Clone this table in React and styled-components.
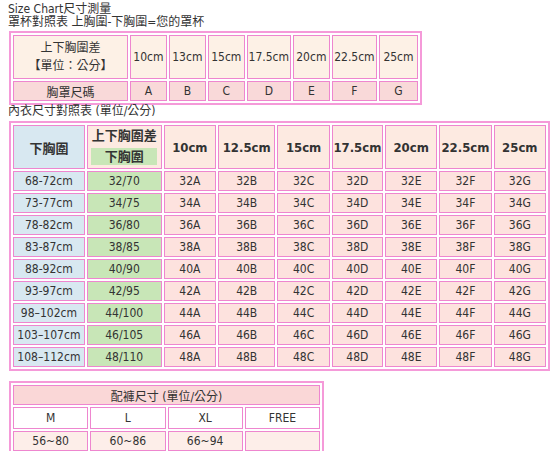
import React from 'react';
import styled, { createGlobalStyle } from 'styled-components';

const GlobalStyle = createGlobalStyle`
  body {
    margin: 0;
    background: #ffffff;
    font-family: "DejaVu Sans Condensed", "DejaVu Sans", "Noto Sans CJK TC", sans-serif;
    color: #333333;
  }
`;

const Page = styled.div`
  padding: 3px 0 0 8px;
  width: 552px;
  box-sizing: border-box;
`;

const Caption = styled.div`
  font-size: 12px;
  line-height: 13px;
  height: 13px;
  color: #333;
`;

const Grid = styled.table`
  border-collapse: separate;
  border-spacing: 2px;
  border: 2px solid #f59ad9;
  table-layout: fixed;
  width: ${props => props.width}px;
  margin-left: 1px;
  margin-top: ${props => props.top || 0}px;
  font-size: 12px;
`;

const bg = {
  cream: '#fdf1e6',
  peach: '#fdeae1',
  rose: '#f9d9d9',
  pink: '#fde2de',
  blue: '#d8e8f1',
  green: '#c8e6b7',
  white: '#ffffff',
  blush: '#fdeee9',
  title: '#fad7d7'
};

const Cell = styled.td`
  border: 1px solid #ee86cf;
  background: ${props => bg[props.tone] || '#fff'};
  text-align: center;
  vertical-align: middle;
  padding: 0;
  height: ${props => props.h || 18}px;
  font-weight: ${props => (props.bold ? 700 : 400)};
  font-size: ${props => (props.bold ? 13 : 12)}px;
  color: #333;
  white-space: nowrap;
`;

const Stack = styled.div`
  display: flex;
  flex-direction: column;
  align-items: center;
  gap: 4px;
  line-height: 14px;
`;

const GreenTag = styled.div`
  background: #c8e6b7;
  width: 66px;
  line-height: 17px;
  margin-top: 1px;
`;

const cups = ['10cm', '13cm', '15cm', '17.5cm', '20cm', '22.5cm', '25cm'];
const cupWidths = [36, 36, 36, 43, 36, 44, 38];
const letters = ['A', 'B', 'C', 'D', 'E', 'F', 'G'];

const sizeCols = ['10cm', '12.5cm', '15cm', '17.5cm', '20cm', '22.5cm', '25cm'];
const sizeWidths = [51, 56, 51, 50, 51, 51, 51];

const rows = [
  ['68-72cm', '32/70', 32],
  ['73-77cm', '34/75', 34],
  ['78-82cm', '36/80', 36],
  ['83-87cm', '38/85', 38],
  ['88-92cm', '40/90', 40],
  ['93-97cm', '42/95', 42],
  ['98–102cm', '44/100', 44],
  ['103–107cm', '46/105', 46],
  ['108–112cm', '48/110', 48]
];

const pants = [
  ['M', '56~80'],
  ['L', '60~86'],
  ['XL', '66~94'],
  ['FREE', '']
];

export default function App() {
  return (
    <Page>
      <GlobalStyle />
      <Caption>Size Chart尺寸測量</Caption>
      <Caption>罩杯對照表 上胸圍-下胸圍=您的罩杯</Caption>

      <Grid width={413} top={2}>
        <colgroup>
          <col style={{ width: 112 }} />
          {cupWidths.map((w, i) => (
            <col key={i} style={{ width: w }} />
          ))}
        </colgroup>
        <tbody>
          <tr>
            <Cell tone="cream" h={42}>
              <Stack>
                <span>上下胸圍差</span>
                <span>【單位：公分】</span>
              </Stack>
            </Cell>
            {cups.map(c => (
              <Cell key={c} tone="cream" h={42}>{c}</Cell>
            ))}
          </tr>
          <tr>
            <Cell tone="rose">胸罩尺碼</Cell>
            {letters.map(l => (
              <Cell key={l} tone="rose">{l}</Cell>
            ))}
          </tr>
        </tbody>
      </Grid>

      <Caption>內衣尺寸對照表 (單位/公分)</Caption>

      <Grid width={541} top={3}>
        <colgroup>
          <col style={{ width: 70 }} />
          <col style={{ width: 73 }} />
          {sizeWidths.map((w, i) => (
            <col key={i} style={{ width: w }} />
          ))}
        </colgroup>
        <tbody>
          <tr>
            <Cell tone="blue" h={42} bold>下胸圍</Cell>
            <Cell tone="peach" h={42} bold>
              <Stack>
                <span>上下胸圍差</span>
                <GreenTag>下胸圍</GreenTag>
              </Stack>
            </Cell>
            {sizeCols.map(c => (
              <Cell key={c} tone="peach" h={42} bold>{c}</Cell>
            ))}
          </tr>
          {rows.map(([under, band, n]) => (
            <tr key={under}>
              <Cell tone="blue">{under}</Cell>
              <Cell tone="green">{band}</Cell>
              {letters.map(l => (
                <Cell key={l} tone="pink">{n + l}</Cell>
              ))}
            </tr>
          ))}
        </tbody>
      </Grid>

      <Grid width={315} top={10}>
        <tbody>
          <tr>
            <Cell tone="title" colSpan={4}>配褲尺寸 (單位/公分)</Cell>
          </tr>
          <tr>
            {pants.map(([s]) => (
              <Cell key={s} tone="white" h={20}>{s}</Cell>
            ))}
          </tr>
          <tr>
            {pants.map(([s, v]) => (
              <Cell key={s} tone="blush">{v}</Cell>
            ))}
          </tr>
        </tbody>
      </Grid>
    </Page>
  );
}
